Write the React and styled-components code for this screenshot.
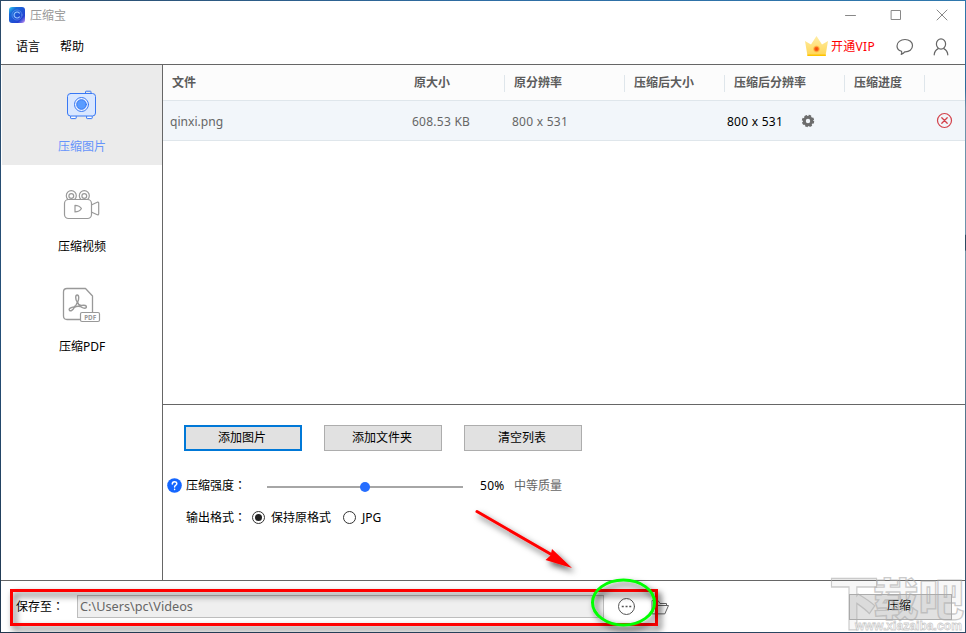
import React from "react";
import styled, { createGlobalStyle } from "styled-components";

const GlobalStyle = createGlobalStyle`
  * { box-sizing: border-box; }
  body { margin: 0; background: #fff; }
  button, input { font: inherit; }
`;

const Frame = styled.div`
  position: relative;
  width: 966px;
  height: 633px;
  padding: 1px;
  overflow: hidden;
  background:
    linear-gradient(90deg, #2b4a68, #2e6da4 50%, #2f78ad) top / 100% 1px no-repeat,
    linear-gradient(90deg, #22384f, #2c4a66) bottom / 100% 1px no-repeat,
    linear-gradient(#2c4a68, #24507a 50%, #22384f) left / 1px 100% no-repeat,
    linear-gradient(#2f78ad 0, #2b6a99 14%, #6d93ab 17%, #6d93ab 37%, #2b4a62 37.2%, #2b4a62 39.5%, #7397aa 39.7%, #2c4a66) right / 1px 100% no-repeat;
  font-family: "Noto Sans", "Noto Sans CJK SC", sans-serif;
  font-size: 12px;
  line-height: 20px;
  color: #000;
  white-space: nowrap;
`;

const Window = styled.div`
  display: flex;
  flex-direction: column;
  width: 964px;
  height: 631px;
  background: #fff;
`;

const TitleBar = styled.header`
  display: flex;
  align-items: center;
  height: 28px;
  padding: 0 17px 0 8px;
  color: #999;
`;

const Title = styled.span`
  flex: 1;
  margin-left: 5px;
  padding-top: 2px;
`;

const WindowControls = styled.div`
  display: flex;
  gap: 34px;
`;

const MenuBar = styled.nav`
  display: flex;
  align-items: center;
  height: 36px;
  padding: 1px 16px 0 15px;
  border-bottom: 1px solid #666;
`;

const MenuItem = styled.span`
  margin-right: 20px;
`;

const Spacer = styled.div`
  flex: 1;
`;

const Vip = styled.div`
  display: flex;
  align-items: center;
  gap: 3px;
  width: 73px;
  margin-right: 18px;
  color: #f00;
  letter-spacing: 0.3px;
`;

const MenuIcons = styled.div`
  display: flex;
  gap: 18px;
`;

const Body = styled.div`
  display: flex;
  height: 515px;
`;

const Sidebar = styled.aside`
  width: 162px;
  border-right: 1px solid #666;
`;

const SideItem = styled.div`
  display: flex;
  flex-direction: column;
  align-items: center;
  height: 100px;
  padding-top: 20px;
  margin-left: 1px;
  background: ${(p) => (p.$active ? "#ebebeb" : "transparent")};
  color: ${(p) => (p.$active ? "#6694fb" : "#000")};
`;

const SideLabel = styled.span`
  margin-top: 12px;
`;

const Content = styled.main`
  flex: 1;
  display: flex;
  flex-direction: column;
`;

const FileTable = styled.section`
  height: 340px;
  border-bottom: 1px solid #666;
`;

const HeaderRow = styled.div`
  display: flex;
  align-items: center;
  height: 36px;
  background: #fcfcfc;
  border-bottom: 1px solid #dfe6eb;
`;

const HeaderCell = styled.div`
  display: flex;
  align-items: center;
  width: ${(p) => p.$w}px;
  height: 17px;
  padding: 0 0 0 9px;
  margin-top: 1px;
  border-right: 1px solid ${(p) => (p.$divider ? "#dfe6eb" : "transparent")};
  color: #5c5c5c;
  font-weight: 700;
`;

const FileRow = styled.div`
  display: flex;
  align-items: center;
  height: 40px;
  padding-top: 3px;
  background: #f2f6fa;
  border-bottom: 1px solid #dfe6eb;
`;

const Cell = styled.div`
  display: flex;
  align-items: center;
  width: ${(p) => p.$w}px;
  padding-left: 7px;
  color: ${(p) => (p.$strong ? "#000" : "#666")};
  font-size: ${(p) => p.$size || 12}px;
  letter-spacing: ${(p) => (p.$size ? 0 : 0.25)}px;
`;

const RowActions = styled.div`
  flex: 1;
  display: flex;
  justify-content: flex-end;
  padding: 0 12px 4px 0;
`;

const Settings = styled.section`
  padding: 20px 0 0 4px;
`;

const ButtonRow = styled.div`
  display: flex;
  gap: 22px;
  padding-left: 17px;
`;

const Button = styled.button`
  width: 118px;
  height: 26px;
  padding: 0 2px 0 0;
  border: ${(p) => (p.$focused ? "2px solid #0078d7" : "1px solid #adadad")};
  background: #e1e1e1;
  color: #000;
  line-height: 20px;
`;

const SettingRow = styled.div`
  display: flex;
  align-items: center;
  height: 20px;
  margin-top: ${(p) => p.$gap}px;
`;

const FieldLabel = styled.span`
  width: ${(p) => p.$w}px;
  margin-left: ${(p) => p.$indent}px;
`;

const Colon = styled.span`
  font-family: "Noto Sans CJK TC", sans-serif;
  line-height: 1;
`;

const Track = styled.div`
  display: flex;
  align-items: center;
  justify-content: center;
  width: 196px;
  height: 2px;
  margin: 2px 17px 0 0;
  background: #a6a6a6;
`;

const Thumb = styled.div`
  flex: none;
  width: 10px;
  height: 10px;
  border-radius: 50%;
  background: #266eff;
`;

const Percent = styled.span`
  width: 34px;
  letter-spacing: 0.3px;
`;

const Quality = styled.span`
  color: #666;
`;

const Radio = styled.span`
  display: flex;
  align-items: center;
  justify-content: center;
  width: 13px;
  height: 13px;
  margin: 0 6px 1px 0;
  border: 1px solid #333;
  border-radius: 50%;

  &::after {
    content: "";
    width: 7px;
    height: 7px;
    border-radius: 50%;
    background: ${(p) => (p.$checked ? "#222" : "transparent")};
  }
`;

const RadioLabel = styled.span`
  margin-right: 12px;
`;

const Footer = styled.footer`
  display: flex;
  align-items: center;
  height: 52px;
  padding: 0 13px 0 15px;
  border-top: 1px solid #666;
`;

const SaveLabel = styled.span`
  width: 61px;
`;

const PathInput = styled.div`
  width: 527px;
  height: 23px;
  margin-right: 13px;
  padding-left: 2px;
  border: 1px solid #bdbdbd;
  background: #efefef;
  color: #666;
  font-size: 12.7px;
  line-height: 21px;
`;

const CompressButton = styled(Button)`
  width: 103px;
  padding: 0 3px 1px 0;
`;

const Overlay = styled.svg`
  position: absolute;
  left: 0;
  top: 0;
  pointer-events: none;
`;

const Glyph = styled.svg`
  display: block;
  flex: none;
  margin: ${(p) => p.$m || "0"};
  fill: none;
  stroke: ${(p) => p.$stroke || "#666"};
  stroke-linecap: round;
  stroke-linejoin: round;
`;

const Logo = () => (
  <Glyph width="16" height="16" $stroke="#9cc9ff">
    <defs>
      <linearGradient id="logo" x1="0" y1="0" x2="1" y2="1">
        <stop offset="0" stopColor="#35d7f2" />
        <stop offset=".25" stopColor="#1769d8" />
        <stop offset=".75" stopColor="#2443d2" />
        <stop offset="1" stopColor="#d59af5" />
      </linearGradient>
    </defs>
    <rect width="16" height="16" rx="3" fill="url(#logo)" stroke="none" />
    <circle cx="8" cy="8" r="5" strokeWidth=".5" strokeOpacity=".7" />
    <path d="M10.4 6.1a3 3 0 1 0 0 3.8" strokeWidth="1.1" />
  </Glyph>
);

const CameraIcon = () => (
  <Glyph width="41" height="40" $m="0 2px 0 0" $stroke="#3878f4">
    <path d="M24.5 8V6.8q0-.6.6-.6h4.3q.6 0 .6.6V8" />
    <path d="M9.6 31.5v1.5q0 .6.6.6h4.4q.6 0 .6-.6v-1.5M25.6 31.5v1.5q0 .6.6.6h4.4q.6 0 .6-.6v-1.5" fill="#fff" />
    <rect x="6.5" y="8.500" width="28" height="22.500" rx="3" fill="#d9e7ff" />
    <circle cx="20.500" cy="19.500" r="7" fill="#edf3ff" />
    <circle cx="20.500" cy="19.500" r="4.800" fill="#5a9cff" />
  </Glyph>
);

const VideoIcon = () => (
  <Glyph width="41" height="40" $m="0 2px 0 0" $stroke="#999" strokeWidth="1.2">
    <path d="M6.800 14.200a5 5 0 1 1 7 0M19.800 14.200a5 5 0 1 1 7 0" />
    <circle cx="10.300" cy="11" r="2.400" />
    <circle cx="23.300" cy="11" r="2.400" />
    <rect x="3.500" y="14.500" width="27" height="19" rx="4" />
    <path d="M30.800 19.700l5.500-2.500q1.400-.4 1.400 1v10.600q0 1.300-1.400.9l-5.500-2.500M14 20.300v6.600c2.500 0 5.600-1.500 6.400-3.300-.8-1.800-3.900-3.300-6.400-3.300z" />
  </Glyph>
);

const PdfIcon = () => (
  <Glyph width="41" height="40" $m="0 2px 0 0" $stroke="#999">
    <path d="M19 34.500H6q-3.500 0-3.500-3.500V7q0-3.500 3.500-3.500h18.500l7 7.500V27" strokeWidth="1.3" />
    <path d="M16.300 17.200c-2.200-3-2-7.200-.1-7.200s2 4.200.4 7.200c.5 2.500 1.400 3.300 3.700 3.300 3.500-.8 5.500.2 5.100 1.800-.6 1.800-4.200.6-6.100-.8-2.400-.5-4.200-.2-6 .9-1.500 2.700-3.600 4.300-4.900 2.800-1-1.500 1.800-3 4.500-3.300 2-.9 2.900-2.200 3.400-4.700z" strokeWidth="1.400" />
    <rect x="19.500" y="27.500" width="19" height="9" rx="1.5" fill="#fff" strokeWidth="1.200" />
    <text x="23.200" y="34.700" fill="#999" stroke="none" fontSize="7" fontWeight="700" textLength="12" lengthAdjust="spacingAndGlyphs">PDF</text>
  </Glyph>
);

const CrownIcon = () => (
  <Glyph width="23" height="20" $m="0 0 3px -1px" $stroke="none">
    <defs>
      <linearGradient id="gold" x1="0" y1="0" x2="0" y2="1">
        <stop offset="0" stopColor="#ffeda6" />
        <stop offset="1" stopColor="#ffd653" />
      </linearGradient>
      <radialGradient id="gem">
        <stop offset="0" stopColor="#f23b0b" />
        <stop offset=".45" stopColor="#fa6a17" />
        <stop offset="1" stopColor="#ffc044" stopOpacity="0" />
      </radialGradient>
    </defs>
    <path d="M0 5l6 3.500L11.500 0 17 8.500 23 5l-2.500 15h-18z" fill="url(#gold)" />
    <circle cx="11.500" cy="13" r="4" fill="url(#gem)" />
    <path d="M2.300 18.500h18.500v1.500H2.500z" fill="#ffc400" />
  </Glyph>
);

const ChatIcon = () => (
  <Glyph width="18" height="18" $m="0 1px 0 -1px" strokeWidth="1.200">
    <path d="M5.500 13.300C2.500 12.300 1 10.300 1 7.900 1 4.300 4.500 1.500 9 1.500s7.500 2.800 7.500 6.100c0 3.900-3.300 6.500-7.800 6.300-.7 1.200-2 2-3.500 2.500q1-1.500.3-3.100z" />
  </Glyph>
);

const UserIcon = () => (
  <Glyph width="16" height="18" strokeWidth="1.200">
    <ellipse cx="8" cy="6" rx="4.600" ry="5.200" />
    <path d="M1.200 16.800c.2-3 1.700-5 4-6.200M14.800 16.800c-.2-3-1.700-5-4-6.200" />
  </Glyph>
);

const GearIcon = () => (
  <Glyph width="14" height="14" $m="0 0 2px 18px" $stroke="#6c6c6c">
    <circle cx="7" cy="7" r="3.700" strokeWidth="3" />
    <circle cx="7" cy="7" r="5.400" strokeWidth="1.600" strokeDasharray="2.600 1.640" strokeLinecap="butt" />
  </Glyph>
);

const RemoveIcon = () => (
  <Glyph width="17" height="17" $stroke="#d3424b">
    <circle cx="8.500" cy="8.500" r="7" strokeWidth="1.200" />
    <path d="M5.800 5.800l5.400 5.400M11.200 5.800l-5.400 5.400" strokeWidth="1.300" />
  </Glyph>
);

const HelpIcon = () => (
  <Glyph width="15" height="15" $m="0 0 1px" $stroke="#fff">
    <circle cx="7.500" cy="7.500" r="7.300" fill="#1466ff" stroke="none" />
    <path d="M5.300 5.900c0-3 4.500-2.900 4.500-.2 0 1.500-2.200 1.600-2.200 3.200M7.600 11.300v.1" strokeWidth="1.500" />
  </Glyph>
);

const MoreIcon = () => (
  <Glyph width="19" height="19" $m="0 15px 0 0" $stroke="#555">
    <circle cx="9.500" cy="9.500" r="8" />
    <path d="M5.500 9.500h.5M9.300 9.500h.5M13 9.500h.5" strokeWidth="1.500" strokeLinecap="square" />
  </Glyph>
);

const FolderIcon = () => (
  <Glyph width="19" height="16">
    <path d="M1 14V1.500h6l2 3h6.500v2M1 14.500L4.500 6.500h13L14 14.500z" />
  </Glyph>
);

const columns = [
  ["文件", 242, false],
  ["原大小", 100, true],
  ["原分辨率", 120, true],
  ["压缩后大小", 100, true],
  ["压缩后分辨率", 120, true],
  ["压缩进度", 80, true],
];

const sections = [
  ["压缩图片", CameraIcon, true],
  ["压缩视频", VideoIcon, false],
  ["压缩PDF", PdfIcon, false],
];

const Watermark = () => (
  <g fill="#999" fillOpacity=".08" stroke="#aaa" strokeOpacity=".6" strokeWidth="1.300" fontFamily="Noto Sans CJK SC" fontWeight="900">
    <text x="829" y="624" fontSize="58" textLength="50" lengthAdjust="spacingAndGlyphs">下</text>
    <text x="873" y="616" fontSize="44" textLength="91" lengthAdjust="spacingAndGlyphs">载吧</text>
    <text x="855" y="630" fontFamily="Liberation Sans" fontWeight="700" fontSize="13" strokeWidth=".8" fill="#fff" fillOpacity=".8" textLength="107" lengthAdjust="spacingAndGlyphs">www.xiazaiba.com</text>
  </g>
);

const Annotations = () => (
  <Overlay width="966" height="633">
    <defs>
      <filter id="shadow" filterUnits="userSpaceOnUse" x="0" y="480" width="720" height="153">
        <feDropShadow dx="3" dy="4" stdDeviation="3" floodColor="#000" floodOpacity=".65" />
      </filter>
      <clipPath id="inside"><rect x="1" y="1" width="964" height="631" /></clipPath>
    </defs>
    <g clipPath="url(#inside)">
      <Watermark />
      <rect x="11.500" y="590.500" width="645" height="34" fill="none" stroke="#f00" strokeWidth="3" filter="url(#shadow)" />
      <g filter="url(#shadow)" fill="#f00">
        <path d="M477 511.500L554 556" stroke="#f00" strokeWidth="3" strokeLinecap="round" />
        <path d="M572 568l-20-19-1.500 6.500L545.500 560z" />
      </g>
      <ellipse cx="623.500" cy="602.500" rx="31" ry="22.500" fill="none" stroke="#0f0" strokeWidth="3" filter="url(#shadow)" />
    </g>
  </Overlay>
);

export default function App() {
  return (
    <Frame>
      <GlobalStyle />
      <Window>
        <TitleBar>
          <Logo />
          <Title>压缩宝</Title>
          <WindowControls>
            <Glyph width="12" height="12" $m="0 -1px 0 2px" $stroke="#888"><path d="M.5 6.500h10" /></Glyph>
            <Glyph width="12" height="12" $m="0 -1px 0 0" $stroke="#888"><path d="M1.500 1.500h9v9h-9z" /></Glyph>
            <Glyph width="12" height="12" $m="0 0 0 1px" $stroke="#888"><path d="M1 1l10 10M11 1L1 11" /></Glyph>
          </WindowControls>
        </TitleBar>
        <MenuBar>
          <MenuItem>语言</MenuItem>
          <MenuItem>帮助</MenuItem>
          <Spacer />
          <Vip><CrownIcon />开通VIP</Vip>
          <MenuIcons><ChatIcon /><UserIcon /></MenuIcons>
        </MenuBar>
        <Body>
          <Sidebar>
            {sections.map(([label, Icon, active]) => (
              <SideItem key={label} $active={active}>
                <Icon />
                <SideLabel>{label}</SideLabel>
              </SideItem>
            ))}
          </Sidebar>
          <Content>
            <FileTable>
              <HeaderRow>
                {columns.map(([label, width, divider]) => (
                  <HeaderCell key={label} $w={width} $divider={divider}>{label}</HeaderCell>
                ))}
              </HeaderRow>
              <FileRow>
                <Cell $w={242} $size={12.1}>qinxi.png</Cell>
                <Cell $w={100}>608.53 KB</Cell>
                <Cell $w={215}>800 x 531</Cell>
                <Cell $w={125} $strong>800 x 531<GearIcon /></Cell>
                <RowActions><RemoveIcon /></RowActions>
              </FileRow>
            </FileTable>
            <Settings>
              <ButtonRow>
                <Button $focused>添加图片</Button>
                <Button>添加文件夹</Button>
                <Button>清空列表</Button>
              </ButtonRow>
              <SettingRow $gap={25}>
                <HelpIcon />
                <FieldLabel $w={81} $indent={4}>压缩强度<Colon>：</Colon></FieldLabel>
                <Track><Thumb /></Track>
                <Percent>50%</Percent>
                <Quality>中等质量</Quality>
              </SettingRow>
              <SettingRow $gap={12}>
                <FieldLabel $w={66} $indent={19}>输出格式<Colon>：</Colon></FieldLabel>
                <Radio $checked />
                <RadioLabel>保持原格式</RadioLabel>
                <Radio />
                <RadioLabel>JPG</RadioLabel>
              </SettingRow>
            </Settings>
          </Content>
        </Body>
        <Footer>
          <SaveLabel>保存至<Colon>：</Colon></SaveLabel>
          <PathInput>C:\Users\pc\Videos</PathInput>
          <MoreIcon />
          <FolderIcon />
          <Spacer />
          <CompressButton>压缩</CompressButton>
        </Footer>
      </Window>
      <Annotations />
    </Frame>
  );
}
